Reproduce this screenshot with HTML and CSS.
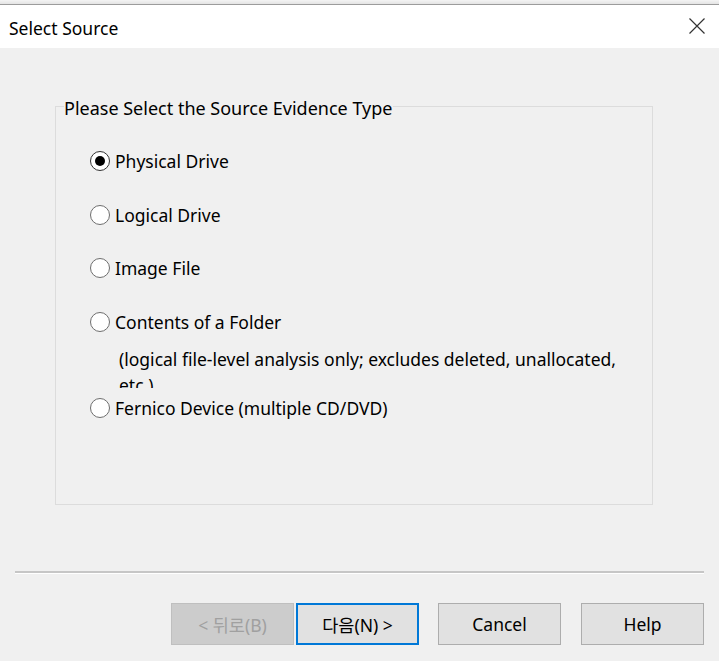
FILE: index.html
```html
<!DOCTYPE html>
<html>
<head>
<meta charset="utf-8">
<link rel="stylesheet" href="styles.css">
</head>
<body>
<div class="win">
  <div class="topstrip"></div>
  <div class="titlebar">
    <span class="title">Select Source</span>
    <svg class="close" width="16" height="16" viewBox="0 0 16 16"><path d="M0.5 0.5 L15.5 15.5 M15.5 0.5 L0.5 15.5" stroke="#333" stroke-width="1.2" fill="none"/></svg>
  </div>
  <div class="content">
    <fieldset class="group">
      <legend class="legend">Please Select the Source Evidence Type</legend>
      <div class="options">
        <div class="opt"><span class="radio checked"><span class="dot"></span></span><span class="label">Physical Drive</span></div>
        <div class="opt"><span class="radio"></span><span class="label">Logical Drive</span></div>
        <div class="opt"><span class="radio"></span><span class="label">Image File</span></div>
        <div class="opt"><span class="radio"></span><span class="label">Contents of a Folder</span></div>
        <div class="note">(logical file-level analysis only; excludes deleted, unallocated, etc.)</div>
        <div class="opt"><span class="radio"></span><span class="label">Fernico Device (multiple CD/DVD)</span></div>
      </div>
    </fieldset>
    <div class="sep"></div>
    <div class="buttons">
      <button class="btn disabled">&lt; 뒤로(B)</button>
      <button class="btn default">다음(N) &gt;</button>
      <button class="btn cancel">Cancel</button>
      <button class="btn help">Help</button>
    </div>
  </div>
</div>
</body>
</html>
```

FILE: styles.css
```css
html, body {
  margin: 0;
  padding: 0;
}
body {
  background: #f0f0f0;
  font-family: "Noto Sans", "Noto Sans CJK KR", sans-serif;
  color: #000;
  width: 719px;
  height: 661px;
  overflow: hidden;
}
.win {
  width: 719px;
  height: 661px;
}
.topstrip {
  height: 4px;
  background: linear-gradient(#f4f4f4, #e4e4e4);
  border-bottom: 1px solid #9c9c9c;
}
.titlebar {
  height: 43px;
  background: #fff;
  display: flex;
  align-items: center;
  justify-content: space-between;
  padding: 0 14px 0 9px;
}
.title {
  font-size: 17.5px;
  padding-top: 2px;
}
.close {
  display: block;
  margin-top: -1px;
}
.content {
  display: flex;
  flex-direction: column;
}
.group {
  margin: 44px 0 0 55px;
  width: 598px;
  height: 413px;
  box-sizing: border-box;
  border: 1px solid #dcdcdc;
  padding: 0;
  min-width: 0;
}
.legend {
  margin-left: 8px;
  padding: 4px 1px 0 0;
  font-size: 18px;
  line-height: 24px;
}
.options {
  display: flex;
  flex-direction: column;
  padding: 29px 0 0 34px;
}
.opt {
  display: flex;
  align-items: center;
  height: 24px;
  font-size: 17.5px;
}
.opt + .opt {
  margin-top: 29.6px;
}
.radio {
  width: 20px;
  height: 20px;
  box-sizing: border-box;
  border-radius: 50%;
  border: 1.5px solid #6e6e6e;
  background: #fff;
  display: flex;
  align-items: center;
  justify-content: center;
  margin-right: 5px;
  flex: none;
}
.radio.checked {
  border-color: #333;
}
.dot {
  width: 10px;
  height: 10px;
  border-radius: 50%;
  background: #000;
}
.note {
  margin: 12px 0 8px 29px;
  width: 530px;
  height: 42px;
  overflow: hidden;
  font-size: 17.5px;
  line-height: 26px;
}
.sep {
  margin: 66px 15px 0 15px;
  height: 2px;
  background: #c6c6c6;
  border-bottom: 1px solid #fff;
}
.buttons {
  display: flex;
  padding-left: 171px;
  margin-top: 29px;
}
.btn {
  width: 123px;
  height: 42px;
  box-sizing: border-box;
  background: #e1e1e1;
  border: 1px solid #adadad;
  font-family: "Noto Sans", "Noto Sans CJK KR", sans-serif;
  font-size: 17.5px;
  color: #000;
  padding: 0;
}
.btn.disabled {
  background: #cccccc;
  border-color: #bfbfbf;
  color: #a0a0a0;
}
.btn.default {
  margin-left: 2px;
  border: 2px solid #0078d7;
}
.btn.cancel {
  margin-left: 19px;
}
.btn.help {
  margin-left: 20px;
}
```
